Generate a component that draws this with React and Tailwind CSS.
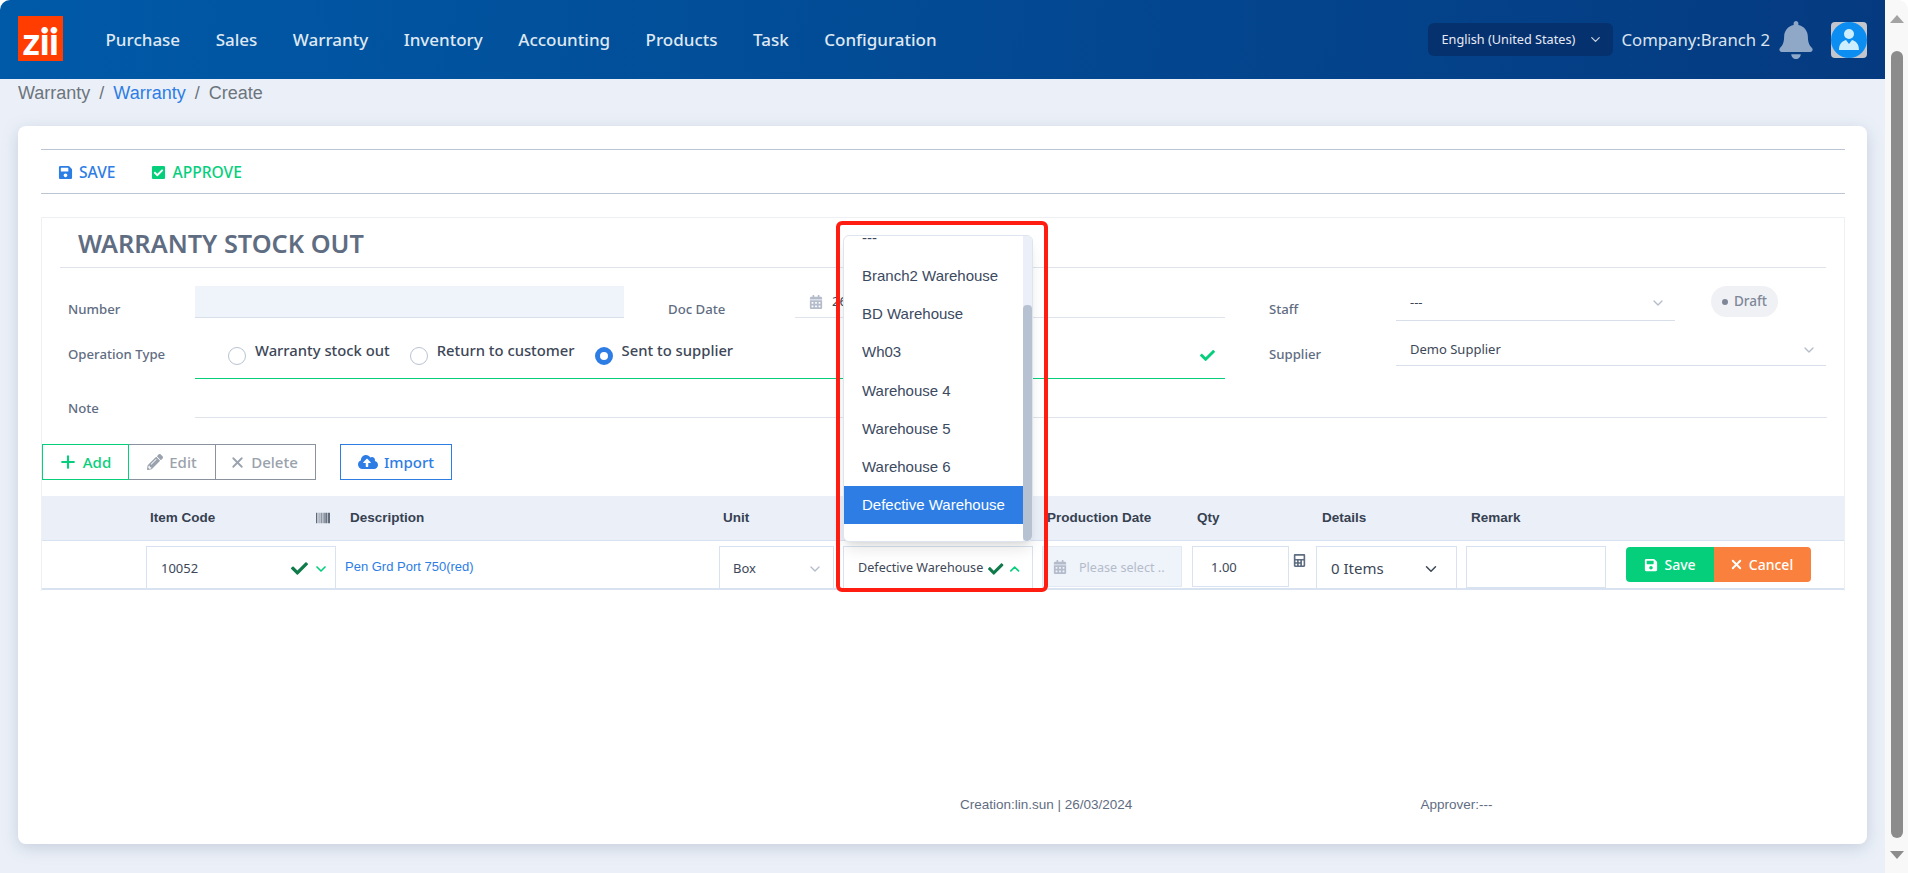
import { ChevronDown, ChevronUp, Plus, X } from 'lucide-react';
import { FaBarcode, FaBell, FaCalculator, FaCalendarAlt, FaCheck, FaCheckSquare, FaCloudUploadAlt, FaPencilAlt, FaSave } from 'react-icons/fa';

const navItems = ['Purchase', 'Sales', 'Warranty', 'Inventory', 'Accounting', 'Products', 'Task', 'Configuration'];
const warehouses = ['Branch2 Warehouse', 'BD Warehouse', 'Wh03', 'Warehouse 4', 'Warehouse 5', 'Warehouse 6'];
const rowGrid = 'grid grid-cols-[104px_190px_383px_124px_199px_150px_124px_150px_160px_1fr]';

function Label({ children, className = '' }) {
    return <div className={`w-[127px] shrink-0 text-[13.2px] leading-[20px] font-medium text-[#5f6d82] ${className}`}>{children}</div>;
}

function Radio({ checked, label, className = '' }) {
    return (
        <div className={`flex items-start ${className}`}>
            <span className={`mt-[12px] w-[18px] h-[18px] rounded-full shrink-0 bg-white ${checked ? 'border-[5px] border-[#2d7de5]' : 'border border-[#b9c3d2]'}`} />
            <span className="mt-[5px] ml-[9px] text-[14.8px] leading-[20px] font-medium text-[#3d4757] whitespace-nowrap">{label}</span>
        </div>
    );
}

function Header() {
    return (
        <header className="h-[79px] shrink-0 flex items-center pl-[18px] pr-[18px] bg-linear-[95deg,#005aa8,#053a80] text-[#dfe8f2]">
            <div className="w-[45px] h-[45px] -mt-[2px] bg-[#ff3d00] flex items-end justify-center">
                <span className="font-['Lato',sans-serif] font-black text-white text-[38px] leading-[42px] tracking-[-0.5px]">zii</span>
            </div>
            <nav className="ml-[42.5px] flex gap-[35.5px] text-[17px] font-medium">
                {navItems.map((item) => (
                    <span key={item}>{item}</span>
                ))}
            </nav>
            <div className="ml-auto flex items-center">
                <div className="w-[185px] h-[33px] rounded-md bg-[#06316f] flex items-center pl-[14px] pr-[10px] justify-between text-[12.7px] text-[#e6ebf3]">
                    <span>English (United States)</span>
                    <ChevronDown size={15} className="text-[#c9d2df]" />
                </div>
                <span className="ml-[9px] text-[16.7px] text-[#dbe4ef] whitespace-nowrap">Company:Branch 2</span>
                <FaBell className="ml-[7px] text-[#8fa8c8] text-[38px]" />
                <div className="ml-[16px] w-[36px] h-[36px] rounded-sm bg-[#c3c6cc]">
                    <svg viewBox="0 0 36 36" className="w-full h-full">
                        <circle cx="18" cy="18" r="18" fill="#0b8df2" />
                        <circle cx="18" cy="12" r="5" fill="#cdeeff" />
                        <path d="M8 28c0-6 3-9 7-10l3 4 3-4c4 1 7 4 7 10z" fill="#cdeeff" />
                    </svg>
                </div>
            </div>
        </header>
    );
}

function Dropdown() {
    return (
        <div className="absolute left-0 bottom-[calc(100%+4px)] w-[190px] h-[307px] z-10 bg-white border border-[#dfe5ee] rounded-md shadow-lg overflow-hidden flex font-['Liberation_Sans',sans-serif] text-[15px] text-[#3b4a5f]">
            <div className="flex-1 -mt-[17px]">
                <div className="h-[38px] flex items-center pl-[18px]">---</div>
                {warehouses.map((w) => (
                    <div key={w} className={`flex items-center pl-[18px] ${w === 'Wh03' ? 'h-[39px]' : 'h-[38px]'}`}>{w}</div>
                ))}
                <div className="h-[38px] flex items-center pl-[18px] bg-[#2d7de5] text-white">Defective Warehouse</div>
            </div>
            <div className="w-[9px] shrink-0 bg-[#ebf0f8] flex flex-col justify-end">
                <div className="h-[236px] bg-[#b6c2d2] rounded-sm" />
            </div>
        </div>
    );
}

function StockForm() {
    return (
        <div className="mt-[23px] border-x border-t border-[#eef0f4] h-[374px]">
            <div className="mx-[18px] h-[50px] border-b border-[#dfe4ec] pl-[18px] pt-[2px] flex items-center">
                <h1 className="text-[25.3px] font-semibold text-[#5f6d82]">WARRANTY STOCK OUT</h1>
            </div>

            {/* Number / Doc Date / Staff */}
            <div className="mt-[18px] ml-[26px] flex items-start">
                <Label className="mt-[13px]">Number</Label>
                <div className="w-[429px] h-[32px] bg-[#eff3fa] border-b border-[#d8deea]" />
                <Label className="ml-[44px] mt-[13px]">Doc Date</Label>
                <div className="w-[430px] h-[32px] border-b border-[#dfe4ec] pl-[14px] flex items-center gap-[9px] text-[13px] text-[#3d4757]">
                    <FaCalendarAlt className="text-[#b4bccb] text-[14px]" />
                    <span>26/03/2024</span>
                </div>
                <Label className="ml-[44px] mt-[13px]">Staff</Label>
                <div className="w-[279px] h-[35px] border-b border-[#d8deea] pl-[14px] pr-[9px] flex items-center justify-between text-[13px] text-[#3d4757]">
                    <span>---</span>
                    <ChevronDown size={16} className="text-[#b4bccb]" />
                </div>
                <div className="ml-[36px] w-[67px] h-[31px] rounded-full bg-[#f0f1f4] flex items-center justify-center gap-[6px] text-[13.5px] text-[#7d8798] font-medium">
                    <span className="w-[6px] h-[6px] rounded-full bg-[#7d8798]" />
                    Draft
                </div>
            </div>

            {/* Operation Type / Supplier */}
            <div className="mt-[14px] ml-[26px] flex items-start">
                <Label className="mt-[9px]">Operation Type</Label>
                <div className="w-[1030px] h-[44px] border-b border-[#06cf7c] pl-[33px] pr-[10px] flex justify-between">
                    <div className="flex">
                        <Radio label="Warranty stock out" />
                        <Radio label="Return to customer" className="ml-[20px]" />
                        <Radio label="Sent to supplier" checked className="ml-[20px]" />
                    </div>
                    <FaCheck className="mt-[13px] text-[#06cf7c] text-[15px]" />
                </div>
                <Label className="ml-[44px] mt-[9px]">Supplier</Label>
                <div className="w-[430px] h-[31px] border-b border-[#d8deea] pl-[14px] pr-[9px] flex items-center justify-between text-[13px] text-[#3d4757]">
                    <span>Demo Supplier</span>
                    <ChevronDown size={16} className="text-[#b4bccb]" />
                </div>
            </div>

            {/* Note */}
            <div className="mt-[6px] ml-[26px] flex items-start">
                <Label className="mt-[13px]">Note</Label>
                <div className="w-[1632px] h-[33px] border-b border-[#dfe4ec]" />
            </div>

            {/* Actions */}
            <div className="mt-[26px] flex items-center text-[15px] font-medium h-[36px]">
                <button className="w-[87px] h-full border border-[#06cf7c] text-[#06cf7c] flex items-center justify-center gap-[5px] pr-[2px]">
                    <Plus size={20} strokeWidth={2.5} /> Add
                </button>
                <button className="w-[87px] h-full border border-l-0 border-[#8a929e] text-[#9aa2ad] flex items-center justify-center gap-[6px]">
                    <FaPencilAlt size={16} /> Edit
                </button>
                <button className="w-[100px] h-full border border-l-0 border-[#8a929e] text-[#9aa2ad] flex items-center justify-center gap-[5px] pr-[4px]">
                    <X size={17} strokeWidth={2.5} /> Delete
                </button>
                <button className="ml-[24px] w-[112px] h-full border border-[#2d7de5] text-[#2d7de5] flex items-center justify-center gap-[6px]">
                    <FaCloudUploadAlt size={20} /> Import
                </button>
            </div>

            {/* Table head */}
            <div className={`${rowGrid} mt-[16px] h-[45px] items-center bg-[#ebf0f8] border-b border-[#d8e2f0] font-['Liberation_Sans',sans-serif] font-bold text-[13.5px] text-[#374151]`}>
                <div />
                <div className="pl-1 pr-[6px] flex items-center justify-between">
                    Item Code <FaBarcode className="text-[#2f3b4c] text-[14px]" />
                </div>
                <div className="pl-[14px]">Description</div>
                <div className="pl-1">Unit</div>
                <div />
                <div className="pl-[5px]">Production Date</div>
                <div className="pl-[5px]">Qty</div>
                <div className="pl-[6px]">Details</div>
                <div className="pl-[5px]">Remark</div>
                <div />
            </div>

            {/* Table row */}
            <div className={`${rowGrid} h-[49px] pt-[5px] border-b-2 border-[#d8e2f0] items-start text-[13px] text-[#3d4757]`}>
                <div />
                <div className="h-[42px] border border-b-0 border-[#d8e2f0] pl-[14px] pr-[6px] pt-[2px] flex items-center">
                    <span className="flex-1">10052</span>
                    <FaCheck className="text-[#0f7a4a] text-[17px]" />
                    <ChevronDown size={16} strokeWidth={2.5} className="ml-[5px] text-[#06cf7c]" />
                </div>
                <div className="pl-[9px] pt-[11px] font-['Liberation_Sans',sans-serif] text-[#2d7de5]">Pen Grd Port 750(red)</div>
                <div>
                    <div className="w-[115px] h-[42px] border border-b-0 border-[#d8e2f0] pl-[13px] pr-[10px] pt-[2px] flex items-center justify-between">
                        <span>Box</span>
                        <ChevronDown size={16} className="text-[#b4bccb]" />
                    </div>
                </div>
                <div className="relative">
                    <Dropdown />
                    <div className="w-[190px] h-[42px] border border-b-0 border-[#d8e2f0] pl-[14px] pr-[10px] pt-[2px] flex items-center text-[12.6px]">
                        <span className="whitespace-nowrap">Defective Warehouse</span>
                        <FaCheck className="ml-[5px] text-[#0f7a4a] text-[16px]" />
                        <ChevronUp size={16} strokeWidth={2.5} className="ml-[3px] text-[#06cf7c]" />
                    </div>
                    <div className="absolute left-[-7px] top-[-325px] w-[212px] h-[371px] z-20 border-[4px] border-[#ff1d12] rounded-md" />
                </div>
                <div>
                    <div className="w-[140px] h-[41px] bg-[#eff3fa] border border-[#e3e9f3] pl-[10px] pt-[3px] flex items-center gap-[12px] text-[12.6px] text-[#b4bccb] whitespace-nowrap overflow-hidden">
                        <FaCalendarAlt className="text-[14px] shrink-0 -mt-[3px]" />
                        Please select ..
                    </div>
                </div>
                <div className="flex items-start">
                    <div className="w-[97px] h-[41px] border border-[#d8e2f0] pl-[18px] pt-[2px] flex items-center">1.00</div>
                    <FaCalculator className="ml-[4px] mt-[8px] text-[#5f6d82] text-[13px]" />
                </div>
                <div>
                    <div className="w-[141px] h-[43px] border border-[#d8e2f0] pl-[14px] pr-[16px] pt-[2px] flex items-center justify-between text-[15px]">
                        0 Items
                        <ChevronDown size={18} className="text-[#3d4757]" />
                    </div>
                </div>
                <div>
                    <div className="w-[140px] h-[42px] border border-[#d8e2f0]" />
                </div>
                <div className="flex h-[35px] mt-[1px] text-[14px] font-medium text-white">
                    <button className="w-[88px] rounded-l bg-[#06cf7c] flex items-center justify-center gap-[6px]">
                        <FaSave size={14} /> Save
                    </button>
                    <button className="w-[97px] rounded-r bg-[#f9813d] flex items-center justify-center gap-[5px] pr-[3px]">
                        <X size={15} strokeWidth={3} /> Cancel
                    </button>
                </div>
            </div>
        </div>
    );
}

export default function App() {
    return (
        <div className="w-[1908px] h-[873px] flex overflow-hidden bg-white rounded-t-[10px] font-['Noto_Sans',sans-serif]">
            <div className="w-[1885px] flex flex-col bg-[#ebf0f8]">
                <Header />

                {/* Breadcrumb */}
                <div className="h-[47px] shrink-0 pl-[18px] pt-[3px] font-['Liberation_Sans',sans-serif] text-[18px] leading-[22px] text-[#6c757d] flex gap-[9px]">
                    <span>Warranty</span>
                    <span>/</span>
                    <span className="text-[#2d7de5]">Warranty</span>
                    <span>/</span>
                    <span>Create</span>
                </div>

                {/* Card */}
                <div className="mx-[18px] h-[718px] bg-white rounded-lg shadow-[0_4px_16px_rgba(90,110,140,0.25)] pl-[23px] pr-[22px] pt-[23px] flex flex-col">
                    <div className="h-[45px] border-y border-[#bcc5d4] flex items-center pl-[17px] pt-[2px] text-[15.6px] font-medium">
                        <span className="flex items-center gap-[6px] text-[#2d7de5]">
                            <FaSave size={15} /> SAVE
                        </span>
                        <span className="ml-[36px] flex items-center gap-[6px] text-[#06cf7c]">
                            <FaCheckSquare size={15} /> APPROVE
                        </span>
                    </div>

                    <StockForm />

                    <div className="mt-auto mb-[30px] pl-[919px] flex font-['Liberation_Sans',sans-serif] text-[13.5px] leading-[18px] text-[#5f6d82]">
                        <span>Creation:lin.sun | 26/03/2024</span>
                        <span className="ml-[288px]">Approver:---</span>
                    </div>
                </div>
            </div>

            {/* Browser scrollbar */}
            <div className="w-[23px] bg-[#f8f8f8] flex flex-col items-center pt-[15px] pb-[14px]">
                <div className="w-0 h-0 border-x-[7px] border-x-transparent border-b-[8px] border-b-[#a3a3a3]" />
                <div className="mt-[28px] w-[12px] flex-1 rounded-full bg-[#8c8c8c]" />
                <div className="mt-[13px] w-0 h-0 border-x-[7px] border-x-transparent border-t-[8px] border-t-[#8c8c8c]" />
            </div>
        </div>
    );
}
